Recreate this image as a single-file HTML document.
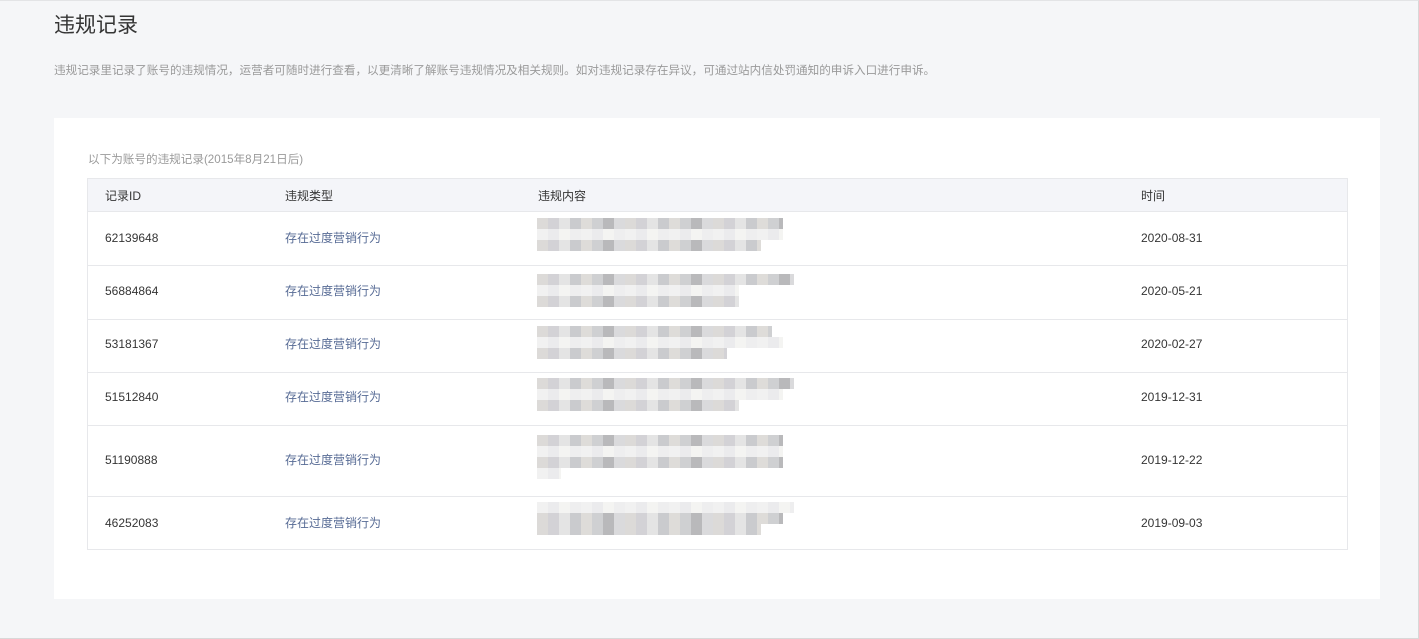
<!DOCTYPE html>
<html><head><meta charset="utf-8"><style>
*{margin:0;padding:0;box-sizing:border-box}
body{width:1419px;height:639px;background:#f5f6f8;font-family:"Liberation Sans","Noto Sans CJK SC",sans-serif;position:relative;overflow:hidden;border-top:1px solid #e3e4e6;border-right:1px solid #d8d8d8;border-bottom:1px solid #d8d8d8}
.a{position:absolute;white-space:nowrap}
.title{left:54px;top:8px;font-size:21px;color:#353535}
.desc{left:54px;top:61px;font-size:11.6px;color:#9a9a9a}
.card{left:54px;top:117px;width:1326px;height:481px;background:#fff}
.cap{left:88px;top:150px;font-size:11.6px;color:#9a9a9a}
.tbl{left:87px;top:177px;width:1261px;height:372px;border:1px solid #e7e8eb}
.hd{left:0;top:0;width:1259px;height:33px;background:#f4f5f9;border-bottom:1px solid #e7e8eb}
.t{font-size:12px;color:#353535}
.ty{color:#576b95;margin-top:-2px}
.ln{position:absolute;left:0;width:1259px;height:1px;background:#e7e8eb}
.blk{position:absolute;height:11px;background:repeating-linear-gradient(90deg,#dcdad8 0 11px,#d3d2d6 11px 22px,#e4e4e4 22px 33px,#cacbce 33px 44px,#dedcd9 44px 55px,#cfd0d2 55px 66px,#b9b9bb 66px 77px,#dadadc 77px 88px)}
.blk.l{background:repeating-linear-gradient(90deg,#f1f1f1 0 11px,#ebebed 11px 22px,#f4f4f2 22px 33px,#eeeeef 33px 44px)}
</style></head><body>
<div class="a title">违规记录</div>
<div class="a desc">违规记录里记录了账号的违规情况，运营者可随时进行查看，以更清晰了解账号违规情况及相关规则。如对违规记录存在异议，可通过站内信处罚通知的申诉入口进行申诉。</div>
<div class="a card"></div>
<div class="a cap">以下为账号的违规记录(2015年8月21日后)</div>
<div class="a tbl">
<div class="a hd"></div>
<div class="a t" style="left:17px;top:8px">记录ID</div>
<div class="a t" style="left:197px;top:8px">违规类型</div>
<div class="a t" style="left:450px;top:8px">违规内容</div>
<div class="a t" style="left:1053px;top:8px">时间</div>

<div class="ln" style="top:86px"></div>
<div class="ln" style="top:140px"></div>
<div class="ln" style="top:193px"></div>
<div class="ln" style="top:246px"></div>
<div class="ln" style="top:317px"></div>

<div class="a t" style="left:17px;top:52px">62139648</div><div class="a t ty" style="left:197px;top:52px">存在过度营销行为</div><div class="a t" style="left:1053px;top:52px">2020-08-31</div>
<div class="blk" style="left:449px;top:39px;width:246px"></div><div class="blk l" style="left:449px;top:50px;width:246px"></div><div class="blk" style="left:449px;top:61px;width:224px"></div>

<div class="a t" style="left:17px;top:105px">56884864</div><div class="a t ty" style="left:197px;top:105px">存在过度营销行为</div><div class="a t" style="left:1053px;top:105px">2020-05-21</div>
<div class="blk" style="left:449px;top:95px;width:257px"></div><div class="blk l" style="left:449px;top:106px;width:202px"></div><div class="blk" style="left:449px;top:117px;width:202px"></div>

<div class="a t" style="left:17px;top:158px">53181367</div><div class="a t ty" style="left:197px;top:158px">存在过度营销行为</div><div class="a t" style="left:1053px;top:158px">2020-02-27</div>
<div class="blk" style="left:449px;top:147px;width:235px"></div><div class="blk l" style="left:449px;top:158px;width:246px"></div><div class="blk" style="left:449px;top:169px;width:190px"></div>

<div class="a t" style="left:17px;top:211px">51512840</div><div class="a t ty" style="left:197px;top:211px">存在过度营销行为</div><div class="a t" style="left:1053px;top:211px">2019-12-31</div>
<div class="blk" style="left:449px;top:199px;width:257px"></div><div class="blk l" style="left:449px;top:210px;width:246px"></div><div class="blk" style="left:449px;top:221px;width:202px"></div>

<div class="a t" style="left:17px;top:274px">51190888</div><div class="a t ty" style="left:197px;top:274px">存在过度营销行为</div><div class="a t" style="left:1053px;top:274px">2019-12-22</div>
<div class="blk" style="left:449px;top:256px;width:246px"></div><div class="blk l" style="left:449px;top:267px;width:246px"></div><div class="blk" style="left:449px;top:278px;width:246px"></div><div class="blk l" style="left:449px;top:289px;width:24px"></div>

<div class="a t" style="left:17px;top:337px">46252083</div><div class="a t ty" style="left:197px;top:337px">存在过度营销行为</div><div class="a t" style="left:1053px;top:337px">2019-09-03</div>
<div class="blk l" style="left:449px;top:323px;width:257px"></div><div class="blk" style="left:449px;top:334px;width:246px"></div><div class="blk" style="left:449px;top:345px;width:224px"></div>
</div>
</body></html>
